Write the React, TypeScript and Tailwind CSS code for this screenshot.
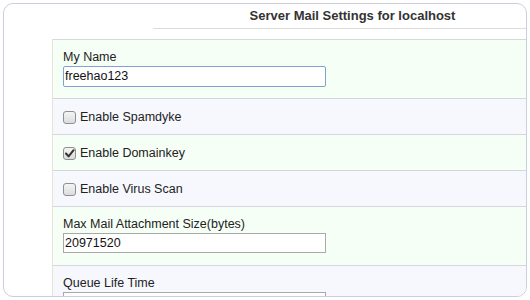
import React from 'react';

const font = { fontFamily: '"Liberation Sans", Arial, sans-serif' };

const Checkbox = ({ checked }: { checked?: boolean }) => (
  <span className="relative flex h-[13px] w-[13px] shrink-0 items-center justify-center rounded-[3px] border border-[#8e8f8f] bg-gradient-to-b from-[#f4f4f4] to-[#dcdcdc]">
    {checked && (
      <svg width="10" height="9" viewBox="0 0 10 9" className="absolute left-[1px] top-[1px]">
        <path d="M1 4.5 L3.6 7.4 L8.6 1.2" fill="none" stroke="#333" strokeWidth="2" strokeLinecap="round" strokeLinejoin="round" />
      </svg>
    )}
  </span>
);

const CheckRow = ({ label, checked, bg }: { label: string; checked?: boolean; bg: string }) => (
  <div className={`flex h-[36px] items-center gap-[4px] border-t border-[#d6d7de] pl-[10px] pt-[1px] ${bg}`}>
    <Checkbox checked={checked} />
    <span className="text-[12.5px] text-[#222]">{label}</span>
  </div>
);

const FieldRow = ({ label, value, focused, bg, h }: { label: string; value: string; focused?: boolean; bg: string; h: string }) => (
  <div className={`flex flex-col border-t border-[#d6d7de] pl-[10px] pt-[10px] ${bg} ${h}`}>
    <span className="text-[12.5px] leading-[15px] text-[#222]">{label}</span>
    <div
      className={
        focused
          ? 'mt-[1px] flex h-[21px] w-[263px] items-center rounded-[2px] border border-[#7ea3d3] bg-white pl-[1px] text-[12.5px] text-[#111]'
          : 'mt-[1px] flex h-[20px] w-[263px] items-center border border-[#a9a9a9] bg-white pl-[1px] text-[12.5px] text-[#111]'
      }
    >
      {value}
    </div>
  </div>
);

export default function App() {
  return (
    <div className="h-[300px] w-[530px] bg-white p-[3px]" style={font}>
      <div className="h-[294px] overflow-hidden rounded-[10px] border border-[#cdcedb] bg-white">
        <div className="ml-[149px] flex h-[25px] items-center justify-center border-b border-[#dcdcdc] pl-[26px] text-[13px] font-bold text-[#333]">
          Server Mail Settings for localhost
        </div>
        <div className="ml-[48px] mt-[10px] border-l border-[#e6e2dc]">
          <FieldRow label="My Name" value="freehao123" focused bg="bg-[#f6fff6]" h="h-[59px]" />
          <CheckRow label="Enable Spamdyke" bg="bg-[#f7f8fd]" />
          <CheckRow label="Enable Domainkey" checked bg="bg-[#f6fff6]" />
          <CheckRow label="Enable Virus Scan" bg="bg-[#f7f8fd]" />
          <FieldRow label="Max Mail Attachment Size(bytes)" value="20971520" bg="bg-[#f6fff6]" h="h-[59px]" />
          <FieldRow label="Queue Life Time" value="" bg="bg-[#f7f8fd]" h="h-[59px]" />
        </div>
      </div>
    </div>
  );
}
